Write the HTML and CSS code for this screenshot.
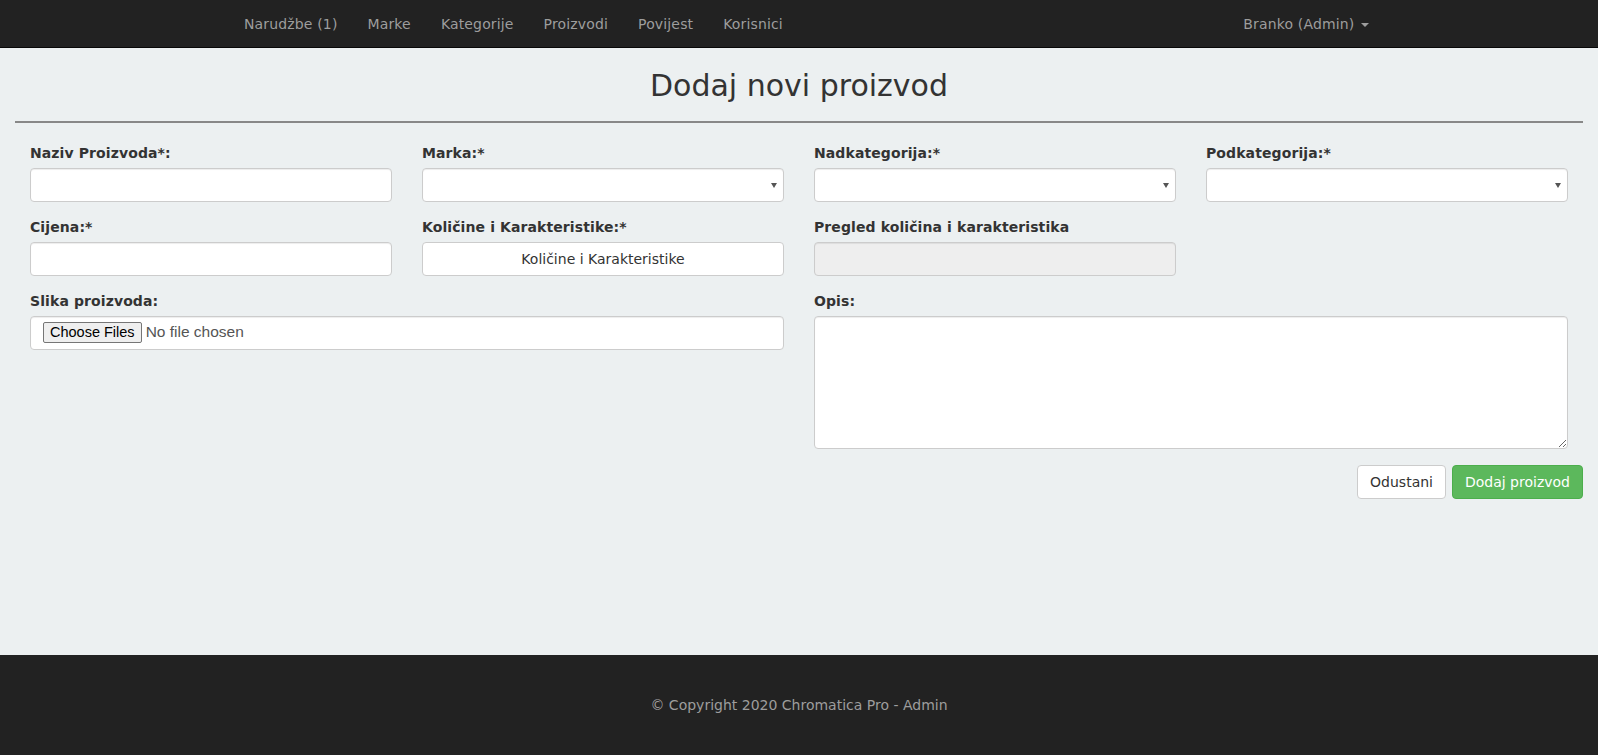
FILE: index.html
```html
<!DOCTYPE html>
<html lang="hr">
<head>
<meta charset="utf-8">
<title>Dodaj novi proizvod</title>
<link rel="stylesheet" href="styles.css">
</head>
<body>
<nav class="navbar">
  <div class="nav-inner">
    <ul class="nav-links">
      <li><a href="#">Narudžbe (1)</a></li>
      <li><a href="#">Marke</a></li>
      <li><a href="#">Kategorije</a></li>
      <li><a href="#">Proizvodi</a></li>
      <li><a href="#">Povijest</a></li>
      <li><a href="#">Korisnici</a></li>
    </ul>
    <ul class="nav-links nav-right">
      <li><a href="#">Branko (Admin) <span class="caret"></span></a></li>
    </ul>
  </div>
</nav>

<main class="main">
  <h2 class="page-title">Dodaj novi proizvod</h2>
  <hr class="divider">
  <form class="product-form">
    <div class="form-grid">
      <div class="form-group">
        <label>Naziv Proizvoda*:</label>
        <input type="text" class="form-control">
      </div>
      <div class="form-group">
        <label>Marka:*</label>
        <div class="select-wrap"><select class="form-control select"><option></option></select></div>
      </div>
      <div class="form-group">
        <label>Nadkategorija:*</label>
        <div class="select-wrap"><select class="form-control select"><option></option></select></div>
      </div>
      <div class="form-group">
        <label>Podkategorija:*</label>
        <div class="select-wrap"><select class="form-control select"><option></option></select></div>
      </div>

      <div class="form-group">
        <label>Cijena:*</label>
        <input type="text" class="form-control">
      </div>
      <div class="form-group">
        <label>Količine i Karakteristike:*</label>
        <button type="button" class="form-control btn-block">Količine i Karakteristike</button>
      </div>
      <div class="form-group">
        <label>Pregled količina i karakteristika</label>
        <input type="text" class="form-control" disabled>
      </div>
      <div class="form-group empty"></div>

      <div class="form-group span2">
        <label>Slika proizvoda:</label>
        <input type="file" multiple class="form-control file">
      </div>
      <div class="form-group span2">
        <label>Opis:</label>
        <textarea class="form-control textarea"></textarea>
      </div>
    </div>
    <div class="actions">
      <button type="button" class="btn btn-default">Odustani</button>
      <button type="button" class="btn btn-success">Dodaj proizvod</button>
    </div>
  </form>
</main>

<footer class="footer">
  <p>© Copyright 2020 Chromatica Pro - Admin</p>
</footer>
</body>
</html>
```

FILE: styles.css
```css
* { box-sizing: border-box; }

html, body {
  margin: 0;
  padding: 0;
}

body {
  font-family: "DejaVu Sans", Verdana, sans-serif;
  font-size: 14px;
  line-height: 20px;
  color: #333;
  background: #ecf0f1;
}

.navbar {
  height: 48px;
  background: #222;
  border-bottom: 1px solid #080808;
}

.nav-inner {
  width: 1170px;
  margin: 0 auto;
  padding-left: 15px;
  display: flex;
  height: 100%;
}

.nav-links {
  list-style: none;
  margin: 0;
  padding: 0;
  display: flex;
  align-items: center;
}

.nav-links a {
  display: block;
  padding: 0 15px;
  color: #9d9d9d;
  text-decoration: none;
  line-height: 46px;
  letter-spacing: 0.15px;
}

.nav-right {
  margin-left: auto;
}

.caret {
  display: inline-block;
  width: 0;
  height: 0;
  margin-left: 2px;
  vertical-align: middle;
  border-top: 4px solid #9d9d9d;
  border-left: 4px solid transparent;
  border-right: 4px solid transparent;
}

.main {
  min-height: 607px;
  padding: 1px 15px 0;
}

.page-title {
  margin: 20px 0 0;
  text-align: center;
  font-size: 30px;
  line-height: 33px;
  font-weight: normal;
  color: #333;
}

.divider {
  margin: 19px 0 0;
  border: 0;
  border-top: 2px solid #888;
}

.product-form {
  padding-top: 20px;
}

.form-grid {
  display: grid;
  grid-template-columns: repeat(4, 1fr);
  column-gap: 30px;
  padding: 0 15px;
}

.span2 {
  grid-column: span 2;
}

.form-group {
  margin-bottom: 15px;
}

.form-group label {
  display: block;
  font-weight: bold;
  margin-bottom: 5px;
  line-height: 20px;
  letter-spacing: 0.1px;
}

.form-control {
  display: block;
  width: 100%;
  height: 34px;
  padding: 6px 12px;
  font-family: inherit;
  font-size: 14px;
  color: #555;
  background: #fff;
  border: 1px solid #ccc;
  border-radius: 4px;
  box-shadow: inset 0 1px 1px rgba(0, 0, 0, 0.075);
}

.form-control:disabled {
  background: #eee;
}

.select-wrap {
  position: relative;
}

.select {
  appearance: none;
  -webkit-appearance: none;
}

.select-wrap::after {
  content: "";
  position: absolute;
  right: 7px;
  top: 15px;
  border-top: 5px solid #555;
  border-left: 3px solid transparent;
  border-right: 3px solid transparent;
  pointer-events: none;
}

.btn-block {
  color: #333;
  text-align: center;
  cursor: pointer;
  box-shadow: none;
}

.file {
  font-family: "Liberation Sans", Arial, sans-serif;
  font-size: 15.5px;
  color: #555;
  padding: 5px 12px;
}

.file::file-selector-button {
  font-family: "Liberation Sans", Arial, sans-serif;
  font-size: 14.5px;
  color: #000;
  background: #efefef;
  border: 1px solid #767676;
  border-radius: 2px;
  padding: 1px 6px;
  margin-right: 4px;
  height: 21px;
  line-height: 17px;
}

.textarea {
  height: 133px;
  resize: vertical;
}

.actions {
  display: flex;
  justify-content: flex-end;
  gap: 6px;
  margin-top: 1px;
}

.btn {
  height: 34px;
  padding: 6px 12px;
  font-family: inherit;
  font-size: 14px;
  line-height: 20px;
  border: 1px solid transparent;
  border-radius: 4px;
  cursor: pointer;
}

.btn-default {
  background: #fff;
  border-color: #ccc;
  color: #333;
}

.btn-success {
  background: #5cb85c;
  border-color: #4cae4c;
  color: #fff;
}

.footer {
  height: 100px;
  background: #222;
  display: flex;
  align-items: center;
  justify-content: center;
}

.footer p {
  margin: 0;
  color: #9d9d9d;
}
```
